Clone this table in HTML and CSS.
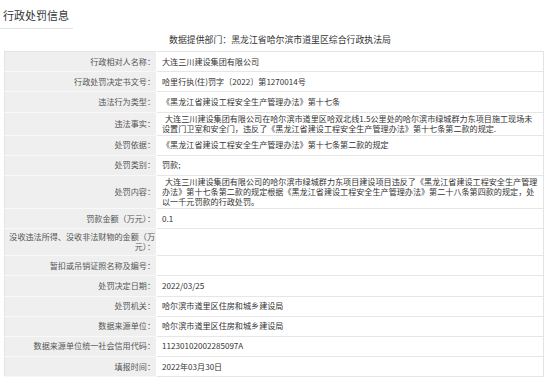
FILE: index.html
```html
<!DOCTYPE html>
<html lang="zh-CN">
<head>
<meta charset="utf-8">
<title>行政处罚信息</title>
<link rel="stylesheet" href="styles.css">
</head>
<body>
<div class="page">
  <div class="title">行政处罚信息</div>
  <div class="provider">数据提供部门：黑龙江省哈尔滨市道里区综合行政执法局</div>
  <table class="info">
    <tr><th>行政相对人名称：</th><td>大连三川建设集团有限公司</td></tr>
    <tr><th>行政处罚决定书文号：</th><td>哈里行执(住)罚字〔2022〕第1270014号</td></tr>
    <tr><th>违法行为类型：</th><td>《黑龙江省建设工程安全生产管理办法》第十七条</td></tr>
    <tr><th>违法事实：</th><td class="para">大连三川建设集团有限公司在哈尔滨市道里区哈双北线1.5公里处的哈尔滨市绿城群力东项目施工现场未设置门卫室和安全门，违反了《黑龙江省建设工程安全生产管理办法》第十七条第二款的规定.</td></tr>
    <tr><th>处罚依据：</th><td>《黑龙江省建设工程安全生产管理办法》第十七条第二款的规定</td></tr>
    <tr><th>处罚类别：</th><td>罚款;</td></tr>
    <tr><th>处罚内容：</th><td class="para">大连三川建设集团有限公司的哈尔滨市绿城群力东项目建设项目违反了《黑龙江省建设工程安全生产管理办法》第十七条第二款的规定根据《黑龙江省建设工程安全生产管理办法》第二十八条第四款的规定，处以一千元罚款的行政处罚。</td></tr>
    <tr><th>罚款金额（万元）：</th><td>0.1</td></tr>
    <tr><th>没收违法所得、没收非法财物的金额（万元）：</th><td></td></tr>
    <tr><th>暂扣或吊销证照名称及编号：</th><td></td></tr>
    <tr><th>处罚决定日期：</th><td>2022/03/25</td></tr>
    <tr><th>处罚机关：</th><td>哈尔滨市道里区住房和城乡建设局</td></tr>
    <tr><th>数据来源单位：</th><td>哈尔滨市道里区住房和城乡建设局</td></tr>
    <tr><th>数据来源单位统一社会信用代码：</th><td>11230102002285097A</td></tr>
    <tr><th>填报时间：</th><td>2022年03月30日</td></tr>
  </table>
</div>
</body>
</html>
```
FILE: styles.css
```css
body {
  margin: 0;
  background: #fff;
  color: #333;
  font-family: "Noto Sans CJK SC", "Noto Sans", sans-serif;
}

.page {
  width: 550px;
}

.title {
  width: fit-content;
  font-size: 11px;
  line-height: 16px;
  padding: 7px 4px 5px 3px;
  border-bottom: 1px solid #e2e2e2;
  color: #333;
}

.provider {
  margin-top: 5px;
  padding-left: 10px;
  font-size: 8.9px;
  line-height: 11px;
  text-align: center;
  color: #333;
}

.info {
  margin: 6px 0 0 4px;
  width: 540px;
  border-collapse: collapse;
  border: 1px solid #e4e4e4;
  font-size: 8.1px;
  line-height: 10px;
}

.info tr {
  height: 20.2px;
}

.info th {
  width: 152px;
  box-sizing: border-box;
  padding: 3px 1px 3px 2px;
  background: #efefef;
  color: #555;
  font-weight: normal;
  text-align: right;
  border-bottom: 1px solid #f8f8f8;
  border-right: 1px solid #fff;
}

.info td {
  padding: 1px 5px 1px 5px;
  text-align: left;
  vertical-align: middle;
  border-bottom: 1px solid #e6e6e6;
  color: #333;
}

.info td.para {
  text-indent: 3px;
}
```
